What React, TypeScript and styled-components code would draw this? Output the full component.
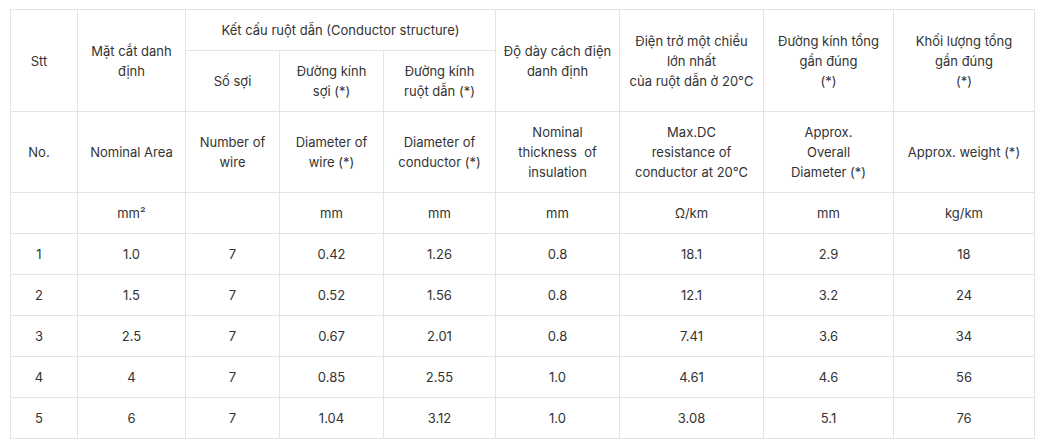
import React from 'react';
import styled, { createGlobalStyle } from 'styled-components';

const GlobalStyle = createGlobalStyle`
  html, body {
    margin: 0;
    padding: 0;
    background: #ffffff;
  }
  body {
    font-family: Inter, "Noto Sans", "Liberation Sans", sans-serif;
    color: #333333;
  }
`;

interface SpecRow {
  no: string;
  area: string;
  wires: string;
  wireDia: string;
  condDia: string;
  insulation: string;
  resistance: string;
  overall: string;
  weight: string;
}

const rows: SpecRow[] = [
  { no: '1', area: '1.0', wires: '7', wireDia: '0.42', condDia: '1.26', insulation: '0.8', resistance: '18.1', overall: '2.9', weight: '18' },
  { no: '2', area: '1.5', wires: '7', wireDia: '0.52', condDia: '1.56', insulation: '0.8', resistance: '12.1', overall: '3.2', weight: '24' },
  { no: '3', area: '2.5', wires: '7', wireDia: '0.67', condDia: '2.01', insulation: '0.8', resistance: '7.41', overall: '3.6', weight: '34' },
  { no: '4', area: '4', wires: '7', wireDia: '0.85', condDia: '2.55', insulation: '1.0', resistance: '4.61', overall: '4.6', weight: '56' },
  { no: '5', area: '6', wires: '7', wireDia: '1.04', condDia: '3.12', insulation: '1.0', resistance: '3.08', overall: '5.1', weight: '76' },
];

const colWidths = [67, 108, 94, 104, 112, 124, 144, 130, 141];

const Page = styled.div`
  padding: 9px 0 0 10px;
`;

const Table = styled.table`
  border-collapse: collapse;
  table-layout: fixed;
  width: 1025px;
  font-size: 13px;
  line-height: 20px;
  color: #333333;
`;

const Cell = styled.td<{ $first?: boolean }>`
  border: 1px solid #e4e4e4;
  text-align: center;
  vertical-align: middle;
  padding: ${(p) => (p.$first ? '10px 15px 10px 5px' : '10px 6px')};
  font-weight: 400;
`;

export default function App() {
  return (
    <Page>
      <GlobalStyle />
      <Table>
        <colgroup>
          {colWidths.map((w, i) => (
            <col key={i} style={{ width: w }} />
          ))}
        </colgroup>
        <tbody>
          <tr>
            <Cell $first rowSpan={2}>Stt</Cell>
            <Cell rowSpan={2}>Mặt cắt danh định</Cell>
            <Cell colSpan={3}>Kết cấu ruột dẫn (Conductor structure)</Cell>
            <Cell rowSpan={2}>
              Độ dày cách điện
              <br />
              danh định
            </Cell>
            <Cell rowSpan={2}>
              Điện trở một chiều
              <br />
              lớn nhất
              <br />
              của ruột dẫn ở 20°C
            </Cell>
            <Cell rowSpan={2}>
              Đường kính tổng
              <br />
              gần đúng
              <br />
              (*)
            </Cell>
            <Cell rowSpan={2}>
              Khối lượng tổng
              <br />
              gần đúng
              <br />
              (*)
            </Cell>
          </tr>
          <tr>
            <Cell>Số sợi</Cell>
            <Cell>Đường kính sợi (*)</Cell>
            <Cell>
              Đường kính
              <br />
              ruột dẫn (*)
            </Cell>
          </tr>
          <tr>
            <Cell $first>No.</Cell>
            <Cell>Nominal Area</Cell>
            <Cell>Number of wire</Cell>
            <Cell>Diameter of wire (*)</Cell>
            <Cell>Diameter of conductor (*)</Cell>
            <Cell>Nominal thickness&nbsp; of insulation</Cell>
            <Cell>
              Max.DC
              <br />
              resistance of
              <br />
              conductor at 20°C
            </Cell>
            <Cell>
              Approx.
              <br />
              Overall
              <br />
              Diameter (*)
            </Cell>
            <Cell>Approx. weight (*)</Cell>
          </tr>
          <tr>
            <Cell $first></Cell>
            <Cell>mm²</Cell>
            <Cell></Cell>
            <Cell>mm</Cell>
            <Cell>mm</Cell>
            <Cell>mm</Cell>
            <Cell>Ω/km</Cell>
            <Cell>mm</Cell>
            <Cell>kg/km</Cell>
          </tr>
          {rows.map((r) => (
            <tr key={r.no}>
              <Cell $first>{r.no}</Cell>
              <Cell>{r.area}</Cell>
              <Cell>{r.wires}</Cell>
              <Cell>{r.wireDia}</Cell>
              <Cell>{r.condDia}</Cell>
              <Cell>{r.insulation}</Cell>
              <Cell>{r.resistance}</Cell>
              <Cell>{r.overall}</Cell>
              <Cell>{r.weight}</Cell>
            </tr>
          ))}
        </tbody>
      </Table>
    </Page>
  );
}
